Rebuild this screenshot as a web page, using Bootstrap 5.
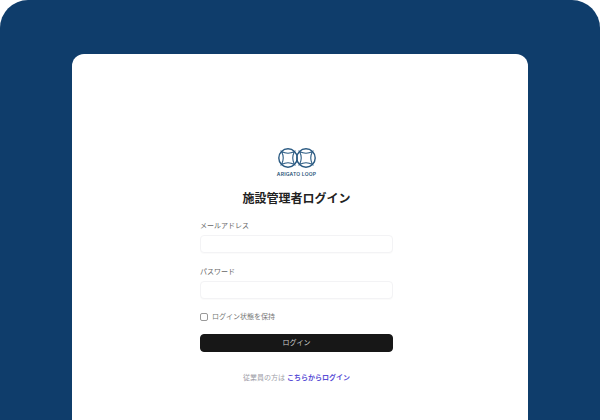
<!DOCTYPE html>
<html lang="ja">
<head>
<meta charset="utf-8">
<title>施設管理者ログイン</title>
<link href="https://cdn.jsdelivr.net/npm/bootstrap@5.3.0/dist/css/bootstrap.min.css" rel="stylesheet">
<style>
html,body{height:420px;overflow:hidden;background:#fff;}
body{font-family:"Inter","Noto Sans CJK JP",sans-serif;}
.stage{height:420px;background:#0f3d6b;border-radius:28px 28px 0 0;padding:54px 72px 0;overflow:hidden;}
.sheet{background:#fff;border-radius:12px 12px 0 0;height:420px;padding:93px 7px 0 0;}
.logo-svg{display:block;width:38px;height:22px;}
.logo-name{font-size:5px;line-height:5px;font-weight:600;color:#2a5478;letter-spacing:.2px;margin-top:3px;white-space:nowrap;}
.login-title{font-size:12px;line-height:18px;font-weight:700;color:#222;margin:13px 0 0;}
.login-form{width:193px;margin:13px auto 0;}
.field-name{font-size:7px;line-height:10px;color:#666;margin-bottom:4px;display:block;}
.field-box{height:18px;min-height:0;padding:0 6px;font-size:8px;border:1px solid #f3f3f5;border-radius:4px;box-shadow:0 1px 1px rgba(0,0,0,.02);}
.field-gap{margin-bottom:14px;}
.keep-row{gap:4px;margin:-1px 0 12px;}
.keep-box{appearance:none;width:8px;height:8px;flex:none;margin:0;padding:0;background:#fff;border:1px solid #999;border-radius:2px;}
.keep-text{font-size:7px;line-height:10px;color:#777;}
.login-btn{height:18px;padding:0;font-size:7px;line-height:16px;color:#ccc;background:#171717;border:1px solid #171717;border-radius:4px;}
.staff-note{font-size:7px;line-height:10px;color:#a0a0a8;margin-top:21px;}
.staff-link{color:#5b4fd6;font-weight:700;text-decoration:none;}
</style>
</head>
<body>
<div class="stage">
  <div class="sheet d-flex flex-column align-items-center text-center">
    <div class="d-flex flex-column align-items-center">
      <svg class="logo-svg" viewBox="0 0 38 22" fill="none" stroke="#2a5a82" aria-hidden="true">
        <circle cx="10" cy="11" r="9.2" stroke-width="1.4"/>
        <circle cx="28" cy="11" r="9.2" stroke-width="1.4"/>
        <path d="M3.5 4.5 Q10 8 16.5 4.5 Q13 11 16.5 17.5 Q10 14 3.5 17.5 Q7 11 3.5 4.5Z" stroke-width="1.1"/>
        <path d="M21.5 4.5 Q28 8 34.5 4.5 Q31 11 34.5 17.5 Q28 14 21.5 17.5 Q25 11 21.5 4.5Z" stroke-width="1.1"/>
      </svg>
      <div class="logo-name">ARIGATO LOOP</div>
    </div>
    <h1 class="login-title">施設管理者ログイン</h1>
    <form class="login-form text-start">
      <div class="field-gap">
        <label class="field-name" for="em">メールアドレス</label>
        <input id="em" type="email" class="form-control field-box">
      </div>
      <div class="field-gap">
        <label class="field-name" for="pw">パスワード</label>
        <input id="pw" type="password" class="form-control field-box">
      </div>
      <div class="d-flex align-items-center keep-row">
        <input id="keep" type="checkbox" class="keep-box">
        <label class="keep-text" for="keep">ログイン状態を保持</label>
      </div>
      <button type="button" class="btn w-100 d-block login-btn">ログイン</button>
      <p class="staff-note text-center mb-0">従業員の方は <a href="#" class="staff-link">こちらからログイン</a></p>
    </form>
  </div>
</div>
</body>
</html>
